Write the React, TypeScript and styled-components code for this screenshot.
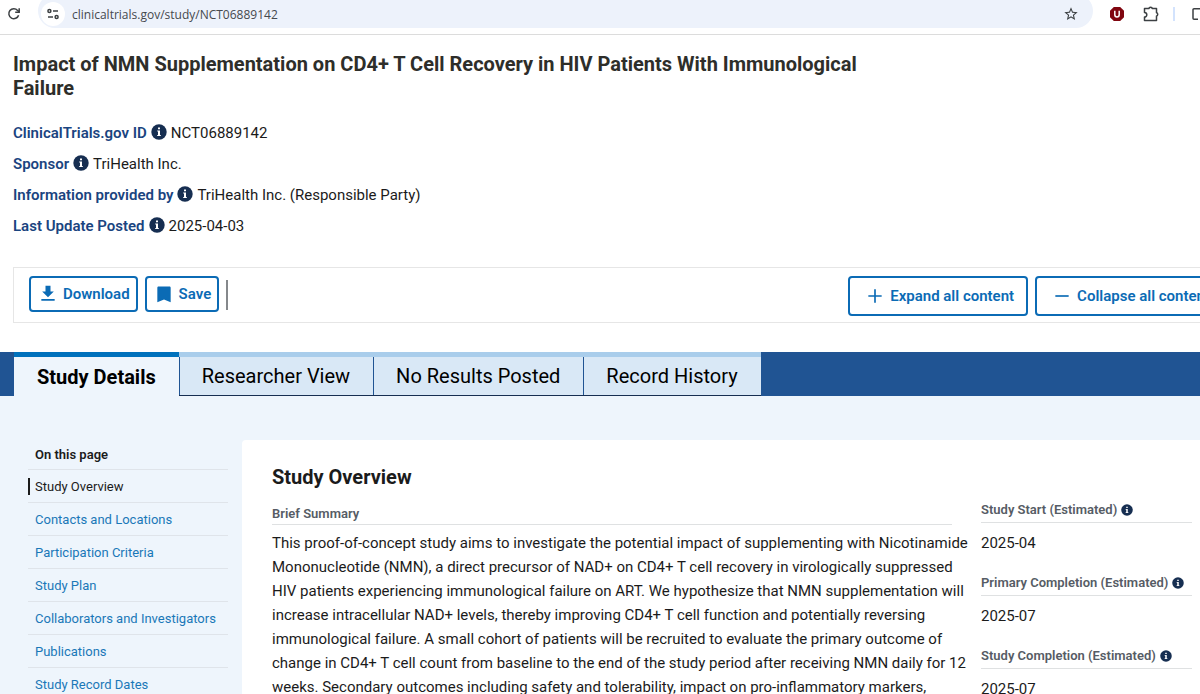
import React from "react";
import styled, { createGlobalStyle } from "styled-components";

const GlobalStyle = createGlobalStyle`
  *, *::before, *::after { box-sizing: border-box; }
  html { scrollbar-width: none; }
  body {
    margin: 0;
    background: #fff;
    color: #1b1b1b;
    font-family: Roboto, "Liberation Sans", sans-serif;
    font-size: 15px;
    overflow-x: hidden;
  }
  button { font-family: inherit; cursor: pointer; }
  svg { display: block; flex: none; }
`;

const Page = styled.div`
  overflow: hidden;
`;

/* Browser bar */

const BrowserBar = styled.div`
  display: flex;
  align-items: flex-start;
  height: 35px;
  border-bottom: 1px solid #dcdcdc;
  overflow: hidden;
`;

const BarButton = styled.button<{ $width: number }>`
  display: flex;
  align-items: center;
  justify-content: center;
  flex: none;
  width: ${(p) => p.$width}px;
  height: 27px;
  padding: 0;
  border: 0;
  background: none;
  color: #3c4043;
`;

const AddressBox = styled.div`
  display: flex;
  align-items: center;
  flex: 1;
  min-width: 0;
  height: 34px;
  margin: -6px 12px 0 10px;
  padding: 6px 10px 0 3px;
  border-radius: 17px;
  background: #edf2fb;
`;

const SiteButton = styled.button`
  display: flex;
  align-items: center;
  justify-content: center;
  flex: none;
  width: 24px;
  height: 24px;
  padding: 0;
  border: 0;
  border-radius: 50%;
  background: #fff;
  color: #3c4043;
`;

const AddressInput = styled.input`
  flex: 1;
  min-width: 0;
  height: 24px;
  padding: 0 7px;
  border: 0;
  outline: 0;
  background: transparent;
  color: #45494e;
  font: 12px "Open Sans", "Noto Sans", sans-serif;
`;

const BarDivider = styled.span`
  flex: none;
  width: 2px;
  height: 14px;
  margin: 7px 16px 0 0;
  background: #d3e3fd;
`;

/* Study header */

const Header = styled.header`
  padding: 17px 13px 0;
`;

const Title = styled.h1`
  max-width: 880px;
  margin: 0 0 17px;
  color: #2e2e2a;
  font-size: 20px;
  font-weight: 700;
  line-height: 24px;
`;

const Facts = styled.dl`
  margin: 0;
`;

const Fact = styled.div`
  display: flex;
  align-items: center;
  height: 31px;
`;

const FactTerm = styled.dt`
  display: flex;
  align-items: center;
  gap: 4px;
  color: #1a4480;
  font-weight: 600;
`;

const FactValue = styled.dd`
  margin: 0 0 0 4px;
`;

const InfoButton = styled.button`
  display: flex;
  flex: none;
  padding: 0 0 1px;
  border: 0;
  background: none;
  color: #162e51;
`;

const Toolbar = styled.div`
  display: flex;
  align-items: flex-start;
  gap: 7px;
  margin: 26px -40px 0 13px;
  padding: 8px 15px;
  border: 1px solid #e6e6e6;
  height: 56px;
`;

const ActionButton = styled.button<{ $wide?: boolean }>`
  display: flex;
  align-items: center;
  flex: none;
  gap: 5px;
  height: ${(p) => (p.$wide ? 40 : 36)}px;
  padding: ${(p) => (p.$wide ? "0 12px 0 15px" : "0 6px 0 7px")};
  border: 2px solid #0b6bb5;
  border-radius: 4px;
  background: #fff;
  color: #0b6bb5;
  font-size: 15px;
  font-weight: 600;
  white-space: nowrap;
`;

const ToolbarDivider = styled.span`
  width: 2px;
  height: 30px;
  margin: 4px auto 0 0;
  background: #85888b;
`;

/* Tabs */

const TabBar = styled.div`
  display: flex;
  height: 44px;
  margin-top: 29px;
  padding-left: 14px;
  background: #205493;
`;

const Tab = styled.button<{ $active?: boolean }>`
  padding: 0 23px;
  border: solid;
  border-width: ${(p) => (p.$active ? "5px 0 0" : "5px 0 1px")};
  border-color: ${(p) => (p.$active ? "#0071bc" : "#a9cdeb")} #205493 #162e51;
  background: ${(p) => (p.$active ? "#eef5fc" : "#d9e8f6")};
  box-shadow: ${(p) => (p.$active ? "none" : "inset 1px 0 #205493")};
  color: #000;
  font-size: 20px;
  font-weight: ${(p) => (p.$active ? 700 : 400)};
  white-space: nowrap;
`;

/* Body */

const Body = styled.div`
  display: flex;
  align-items: flex-start;
  gap: 14px;
  padding: 44px 0 0 28px;
  background: #eef5fc;
`;

const SideNav = styled.nav`
  flex: none;
  width: 200px;
  font-size: 13px;
`;

const SideHeading = styled.h2`
  margin: 0;
  padding: 0 7px;
  font-size: 13px;
  font-weight: 600;
  line-height: 29px;
`;

const SideList = styled.ul`
  margin: 0;
  padding: 0;
  list-style: none;
`;

const SideItem = styled.li`
  display: flex;
  align-items: center;
  height: 33px;
  border-top: 1px solid #dfe4ea;
`;

const SideLink = styled.a<{ $active?: boolean }>`
  padding-left: ${(p) => (p.$active ? 5 : 7)}px;
  border-left: ${(p) => (p.$active ? "2px solid #1b1b1b" : "0")};
  color: ${(p) => (p.$active ? "#1b1b1b" : "#1a78b8")};
  line-height: 17px;
  text-decoration: none;
  white-space: nowrap;
`;

const Card = styled.main`
  display: grid;
  grid-template-columns: minmax(0, 1fr) 211px;
  gap: 8px;
  flex: 1;
  min-width: 0;
  padding: 25px 8px 0 30px;
  border-top-left-radius: 4px;
  background: #fff;
`;

const SectionTitle = styled.h2`
  margin: 0 0 15px;
  font-size: 20px;
  font-weight: 700;
  line-height: 24px;
`;

const FieldLabel = styled.h3`
  display: flex;
  align-items: center;
  gap: 4px;
  margin: 0;
  border-bottom: 1px solid #dfe1e2;
  color: #565c65;
  font-size: 13px;
  font-weight: 600;
  line-height: 24px;
  white-space: nowrap;
`;

const SummaryLabel = styled(FieldLabel)`
  margin-right: 21px;
  line-height: 20px;
`;

const Summary = styled.p`
  margin: 6px 0 0;
  line-height: 24px;
`;

const Dates = styled.div`
  padding-top: 33px;
`;

const DateField = styled.section`
  height: 73px;
`;

const DateValue = styled.p`
  margin: 8px 0 0;
  line-height: 24px;
`;

function InfoIcon({ size, label }: { size: number; label: string }) {
  return (
    <InfoButton type="button" aria-label={`About ${label}`}>
      <svg width={size} height={size} viewBox="0 0 16 16" aria-hidden="true">
        <circle cx="8" cy="8" r="7.700" fill="currentColor" />
        <path d="M7 3.600h2v1.700H7zM6.200 6.600H9v4.400h.8v1H6.200v-1H7V7.600h-.8z" fill="#fff" />
      </svg>
    </InfoButton>
  );
}

function GlyphIcon({ path, size = 20 }: { path: string; size?: number }) {
  return (
    <svg width={size} height={size} viewBox="0 0 24 24" fill="currentColor" aria-hidden="true">
      <path d={path} />
    </svg>
  );
}

const DOWNLOAD = "M19 9h-4V2H9v7H5l7 7 7-7zM4 18v2h16v-2H4z";
const BOOKMARK = "M18.500 3H5.500c-.8 0-1.500.7-1.500 1.500V22l8-3.500 8 3.500V4.500c0-.8-.7-1.500-1.500-1.500z";
const PLUS = "M20 13h-7v7h-2v-7H4v-2h7V4h2v7h7v2z";
const MINUS = "M20 13H4v-2h16v2z";

const facts = [
  ["ClinicalTrials.gov ID", "NCT06889142"],
  ["Sponsor", "TriHealth Inc."],
  ["Information provided by", "TriHealth Inc. (Responsible Party)"],
  ["Last Update Posted", "2025-04-03"],
];

const tabs = ["Study Details", "Researcher View", "No Results Posted", "Record History"];

const sections = [
  "Study Overview",
  "Contacts and Locations",
  "Participation Criteria",
  "Study Plan",
  "Collaborators and Investigators",
  "Publications",
  "Study Record Dates",
];

const dates = [
  ["Study Start (Estimated)", "2025-04"],
  ["Primary Completion (Estimated)", "2025-07"],
  ["Study Completion (Estimated)", "2025-07"],
];

function Browser() {
  return (
    <BrowserBar>
      <BarButton $width={28} type="button" aria-label="Reload">
        <svg width="14" height="14" viewBox="0 0 14 14" fill="none" stroke="currentColor" strokeWidth="1.500">
          <path d="M11.600 8.200A5 5 0 1 1 10.600 3.400L12 4.800" />
          <path d="M12.200 1.200v4H8.200" />
        </svg>
      </BarButton>
      <AddressBox>
        <SiteButton type="button" aria-label="View site information">
          <svg width="14" height="14" viewBox="0 0 14 14" fill="none" stroke="currentColor" strokeWidth="1.500">
            <circle cx="3.400" cy="4" r="1.500" />
            <path d="M7 4h5M2 10h5" />
            <circle cx="10.600" cy="10" r="1.500" />
          </svg>
        </SiteButton>
        <AddressInput aria-label="Address" defaultValue="clinicaltrials.gov/study/NCT06889142" />
        <BarButton $width={24} type="button" aria-label="Bookmark this page">
          <svg width="16" height="16" viewBox="0 0 24 24" fill="currentColor">
            <path d="M22 9.240l-7.190-.62L12 2 9.190 8.630 2 9.240l5.460 4.730L5.820 21 12 17.270 18.180 21l-1.630-7.030L22 9.240zM12 15.400l-3.760 2.270 1-4.280-3.320-2.880 4.380-.38L12 6.100l1.710 4.040 4.380.38-3.320 2.880 1 4.280L12 15.400z" />
          </svg>
        </BarButton>
      </AddressBox>
      <BarButton $width={24} type="button" aria-label="Ad blocker">
        <svg width="16" height="16" viewBox="0 0 16 16">
          <path d="M4.800 1h6.400L15 4.800v6.400L11.200 15H4.800L1 11.200V4.800z" fill="#800610" />
          <path d="M5.800 4.800v4a2.200 2.200 0 0 0 4.400 0v-4" fill="none" stroke="#fff" strokeWidth="1.500" />
        </svg>
      </BarButton>
      <BarButton $width={44} type="button" aria-label="Extensions">
        <svg width="18" height="18" viewBox="0 0 18 18" fill="none" stroke="currentColor" strokeWidth="1.500" strokeLinejoin="round">
          <path d="M2.500 3.500H7a1.600 1.200 0 0 1 3.200 0H14.500v4.200a1.200 1.600 0 0 1 0 3.200v4.600H2.500v-3.400a2 2 0 0 0 0-4.600z" />
        </svg>
      </BarButton>
      <BarDivider />
      <BarButton $width={9} type="button" aria-label="Side panel">
        <svg width="8" height="16" viewBox="0 0 8 16" fill="none" stroke="currentColor" strokeWidth="1.500">
          <path d="M8 2.800H2a1 1 0 0 0-1 1v8.400a1 1 0 0 0 1 1h4" />
        </svg>
      </BarButton>
    </BrowserBar>
  );
}

export default function App() {
  return (
    <Page>
      <GlobalStyle />
      <Browser />
      <Header>
        <Title>
          Impact of NMN Supplementation on CD4+ T Cell Recovery in HIV Patients With Immunological Failure
        </Title>
        <Facts>
          {facts.map(([term, value]) => (
            <Fact key={term}>
              <FactTerm>
                {term}
                <InfoIcon size={16} label={term} />
              </FactTerm>
              <FactValue>{value}</FactValue>
            </Fact>
          ))}
        </Facts>
      </Header>
      <Toolbar>
        <ActionButton type="button">
          <GlyphIcon path={DOWNLOAD} />
          Download
        </ActionButton>
        <ActionButton type="button">
          <GlyphIcon path={BOOKMARK} />
          Save
        </ActionButton>
        <ToolbarDivider />
        <ActionButton $wide type="button">
          <GlyphIcon path={PLUS} />
          Expand all content
        </ActionButton>
        <ActionButton $wide type="button">
          <GlyphIcon path={MINUS} />
          Collapse all content
        </ActionButton>
      </Toolbar>
      <TabBar role="tablist">
        {tabs.map((tab, i) => (
          <Tab key={tab} type="button" role="tab" aria-selected={i === 0} $active={i === 0}>
            {tab}
          </Tab>
        ))}
      </TabBar>
      <Body>
        <SideNav aria-label="On this page">
          <SideHeading>On this page</SideHeading>
          <SideList>
            {sections.map((section, i) => (
              <SideItem key={section}>
                <SideLink href="#" $active={i === 0}>
                  {section}
                </SideLink>
              </SideItem>
            ))}
          </SideList>
        </SideNav>
        <Card>
          <div>
            <SectionTitle>Study Overview</SectionTitle>
            <SummaryLabel>Brief Summary</SummaryLabel>
            <Summary>
              This proof-of-concept study aims to investigate the potential impact of supplementing with
              Nicotinamide Mononucleotide (NMN), a direct precursor of NAD+ on CD4+ T cell recovery in
              virologically suppressed HIV patients experiencing immunological failure on ART. We hypothesize
              that NMN supplementation will increase intracellular NAD+ levels, thereby improving CD4+ T cell
              function and potentially reversing immunological failure. A small cohort of patients will be
              recruited to evaluate the primary outcome of change in CD4+ T cell count from baseline to the end
              of the study period after receiving NMN daily for 12 weeks. Secondary outcomes including safety
              and tolerability, impact on pro-inflammatory markers,
            </Summary>
          </div>
          <Dates>
            {dates.map(([label, value]) => (
              <DateField key={label}>
                <FieldLabel>
                  {label}
                  <InfoIcon size={12} label={label} />
                </FieldLabel>
                <DateValue>{value}</DateValue>
              </DateField>
            ))}
          </Dates>
        </Card>
      </Body>
    </Page>
  );
}
